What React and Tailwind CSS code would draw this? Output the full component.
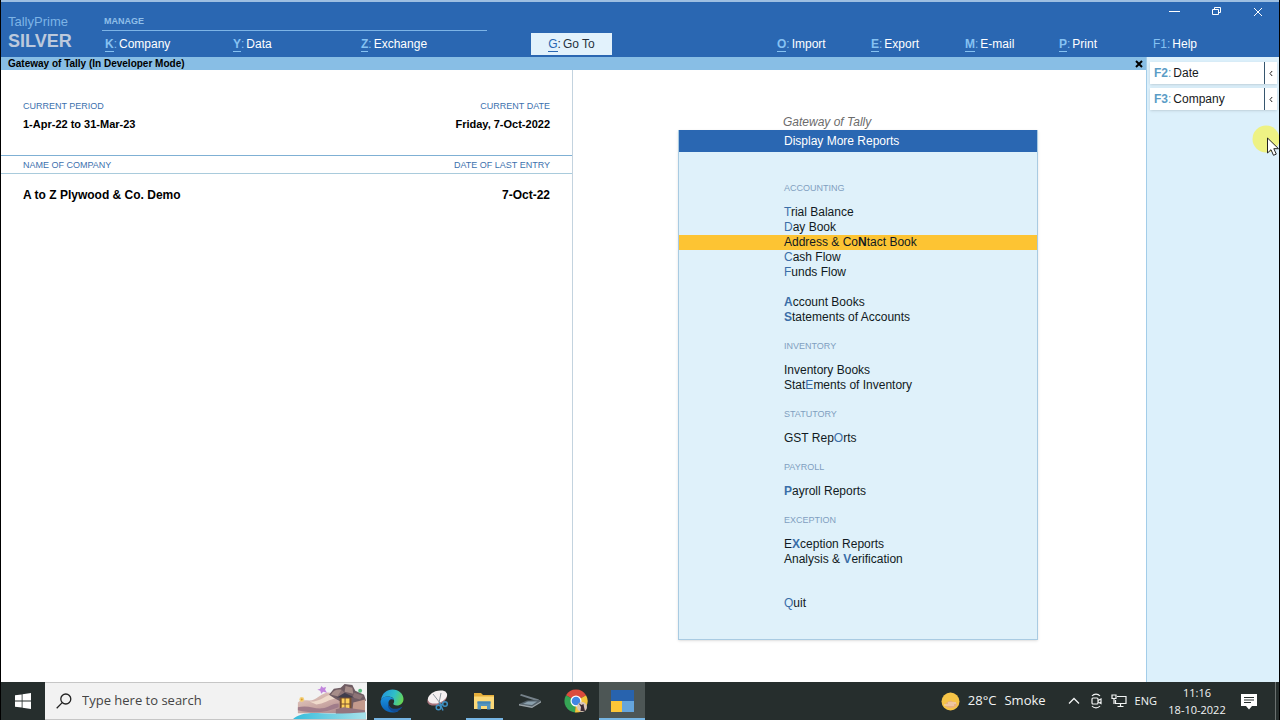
import React from 'react';

const FILE_MENU = [
  { key: 'K', label: 'Company' },
  { key: 'Y', label: 'Data' },
  { key: 'Z', label: 'Exchange' },
];

const TOOLS_MENU = [
  { key: 'O', label: 'Import' },
  { key: 'E', label: 'Export' },
  { key: 'M', label: 'E-mail' },
  { key: 'P', label: 'Print' },
  { key: 'F1', label: 'Help', plain: true },
];

// pre + hot + post = full label, "hot" is the shortcut letter
const GROUPS = [
  {
    title: 'ACCOUNTING',
    items: [
      { hot: 'T', post: 'rial Balance' },
      { hot: 'D', post: 'ay Book' },
      { pre: 'Address & Co', hot: 'N', post: 'tact Book', active: true },
      { hot: 'C', post: 'ash Flow' },
      { hot: 'F', post: 'unds Flow' },
      { hot: 'A', post: 'ccount Books', gap: true, bold: true },
      { hot: 'S', post: 'tatements of Accounts', bold: true },
    ],
  },
  {
    title: 'INVENTORY',
    items: [
      { hot: 'I', post: 'nventory Books', dark: true },
      { pre: 'Stat', hot: 'E', post: 'ments of Inventory' },
    ],
  },
  { title: 'STATUTORY', items: [{ pre: 'GST Rep', hot: 'O', post: 'rts' }] },
  { title: 'PAYROLL', items: [{ hot: 'P', post: 'ayroll Reports', bold: true }] },
  {
    title: 'EXCEPTION',
    items: [
      { pre: 'E', hot: 'X', post: 'ception Reports', bold: true },
      { pre: 'Analysis & ', hot: 'V', post: 'erification', bold: true },
    ],
  },
];

function MenuKey({ item }) {
  return (
    <button type="button" className="flex flex-1 items-center gap-[2px] text-left text-[12px] text-white">
      <span className="text-[#86c2f2]">
        <span className={item.plain ? '' : 'font-bold border-b border-[#86c2f2]'}>{item.key}</span>:
      </span>
      {item.label}
    </button>
  );
}

function WindowControls() {
  return (
    <div className="flex text-white">
      <button type="button" aria-label="Minimize" className="flex h-[19px] w-[41px] items-center justify-center">
        <svg width="11" height="11" viewBox="0 0 11 11" stroke="currentColor"><path d="M0 5.5h11" /></svg>
      </button>
      <button type="button" aria-label="Restore" className="flex h-[19px] w-[42px] items-center justify-center">
        <svg width="11" height="11" viewBox="0 0 11 11" fill="none" stroke="currentColor">
          <path d="M1.5 3.5h6v5h-6zM3.500 3.500v-2h6v5h-2" />
        </svg>
      </button>
      <button type="button" aria-label="Close" className="flex h-[19px] w-[42px] items-center justify-center">
        <svg width="10" height="10" viewBox="0 0 10 10" stroke="currentColor"><path d="M1 1l8 8M9 1L1 9" /></svg>
      </button>
    </div>
  );
}

function Header() {
  return (
    <header className="flex h-[57px] shrink-0 border-t-2 border-[#9dbfe2] bg-[#2a67b2]">
      <div className="w-[101px] shrink-0 pl-[7px] pt-3">
        <div className="text-[13px] leading-4 text-[#7db4e6]">TallyPrime</div>
        <div className="text-[18px] font-bold leading-[22px] text-[#bcc9dc]">SILVER</div>
      </div>
      <div className="flex flex-1 flex-col">
        <div className="flex h-[29px] items-start justify-between">
          <div className="flex h-full w-[385px] items-end border-b border-[#7db4e6] pb-[3px] pl-[2px] text-[9px] font-bold leading-3 text-[#8fbfe9]">
            MANAGE
          </div>
          <WindowControls />
        </div>
        <nav className="flex h-[26px] items-center pl-[3px]">
          <div className="flex flex-[384]">
            {FILE_MENU.map((m) => <MenuKey key={m.key} item={m} />)}
          </div>
          <div className="flex-[42]" />
          <div className="flex-[246]">
            <button type="button" className="flex h-[22px] w-[81px] items-center justify-center gap-[2px] bg-[#e2f2fc] text-[12px] text-[#27313c]">
              <span><span className="border-b border-[#2a67b2] text-[#2a67b2]">G</span>:</span>
              Go To
            </button>
          </div>
          <div className="flex flex-[470]">
            {TOOLS_MENU.map((m) => <MenuKey key={m.key} item={m} />)}
          </div>
          <div className="flex-[32]" />
        </nav>
      </div>
    </header>
  );
}

function CompanyPanel() {
  return (
    <section className="flex-[573] border-r border-[#c3d3df] text-[11px]">
      <div className="flex h-[85px] justify-between px-[22px] pt-[29px]">
        <div>
          <div className="text-[9px] leading-[14px] text-[#3d71ae]">CURRENT PERIOD</div>
          <div className="mt-[2px] font-bold leading-[18px]">1-Apr-22 to 31-Mar-23</div>
        </div>
        <div className="text-right">
          <div className="text-[9px] leading-[14px] text-[#3d71ae]">CURRENT DATE</div>
          <div className="mt-[2px] font-bold leading-[18px]">Friday, 7-Oct-2022</div>
        </div>
      </div>
      <table className="w-full border-separate border-spacing-0">
        <thead>
          <tr className="h-[19px] text-[9px] leading-3 text-[#3d71ae]">
            <th className="border-b border-t border-b-[#a9cbdc] border-t-[#7fb0d4] pl-[22px] text-left font-normal">NAME OF COMPANY</th>
            <th className="border-b border-t border-b-[#a9cbdc] border-t-[#7fb0d4] pr-[22px] text-right font-normal">DATE OF LAST ENTRY</th>
          </tr>
        </thead>
        <tbody>
          <tr className="h-[41px] text-[12px] font-bold">
            <td className="pl-[22px]">A to Z Plywood &amp; Co. Demo</td>
            <td className="pr-[22px] text-right">7-Oct-22</td>
          </tr>
        </tbody>
      </table>
    </section>
  );
}

function ReportItem({ item }) {
  let hot = 'text-[#3a6ea8]';
  if (item.active) hot = 'font-bold';
  else if (item.bold) hot = 'font-bold text-[#3a6ea8]';
  else if (item.dark) hot = '';

  return (
    <li className={item.gap ? 'mt-[15px]' : ''}>
      <button
        type="button"
        className={`block h-[15px] w-full pl-[105px] text-left text-[12px] leading-[15px] ${item.active ? 'bg-[#fdc433]' : ''}`}
      >
        {item.pre}<span className={hot}>{item.hot}</span>{item.post}
      </button>
    </li>
  );
}

function ReportsMenu() {
  return (
    <section className="flex flex-[572] justify-center pr-[3px] pt-[44px]">
      <div className="w-[360px]">
        <div className="pl-[105px] text-[12px] italic leading-4 text-[#6b6b6b]">Gateway of Tally</div>
        <div className="border border-t-0 border-[#a9cbe2] bg-[#dff1fa] pb-[28px] text-[#111a22] shadow-sm">
          <h2 className="mb-[15px] bg-[#2a67b2] pl-[105px] text-[12px] leading-[22px] text-white">Display More Reports</h2>
          {GROUPS.map((g) => (
            <div key={g.title}>
              <h3 className="pb-[9px] pl-[105px] pt-[14px] text-[9px] leading-[15px] text-[#7f9fc0]">{g.title}</h3>
              <ul>
                {g.items.map((it) => <ReportItem key={it.hot + it.post} item={it} />)}
              </ul>
            </div>
          ))}
          <ul className="mt-[29px]">
            <ReportItem item={{ hot: 'Q', post: 'uit' }} />
          </ul>
        </div>
      </div>
    </section>
  );
}

function SideButton({ keyName, label }) {
  return (
    <div className="flex h-[22px] bg-white text-[12px] shadow-sm">
      <button type="button" className="flex flex-1 items-center gap-[2px] pl-1 text-left text-[#16191c]">
        <span className="text-[#5b9cc6]"><b>{keyName}</b>:</span>{label}
      </button>
      <button type="button" aria-label={`Expand ${label}`} className="flex w-[13px] items-center justify-center border-l border-[#36566f]">
        <svg width="4" height="7" viewBox="0 0 4 7" fill="none" stroke="#222"><path d="M3.200 1L1 3.500 3.200 6" /></svg>
      </button>
    </div>
  );
}

function Pointer() {
  return (
    <svg className="pointer-events-none absolute right-0 top-[68px]" width="27" height="36" viewBox="0 0 27 36">
      <circle cx="14" cy="14" r="13.500" fill="#eef284" />
      <path d="M15.500 13v15l3.500-3.300 2.500 5.600 2.800-1.200-2.500-5.400h4.700z" fill="#fff" stroke="#222" />
    </svg>
  );
}

function WindowsLogo() {
  return (
    <svg width="16" height="16" viewBox="0 0 16 16" fill="#fff">
      <path d="M0 2.300l6.700-.9v6.200H0zM7.500 1.300L16 0v7.600H7.500zM0 8.400h6.700v6.200L0 13.700zM7.500 8.400H16V16l-8.500-1.300z" />
    </svg>
  );
}

function SearchScene() {
  return (
    <svg className="h-full" width="75" height="37" viewBox="0 0 75 37">
      <defs>
        <linearGradient id="dune" x1="0" x2="1" y1="0" y2="1">
          <stop offset="0" stopColor="#e8cfc4" /><stop offset=".5" stopColor="#c9a6a2" /><stop offset="1" stopColor="#9c7c86" />
        </linearGradient>
        <linearGradient id="sea" x1="0" x2="1">
          <stop offset="0" stopColor="#35bcdc" /><stop offset="1" stopColor="#a9e2ea" />
        </linearGradient>
      </defs>
      <path d="M5 31V20c3-3 8-2 12-2 7 0 10-6 17-8 4-1 7 1 10 3l30 2v16z" fill="url(#dune)" />
      <path d="M5 25c10-3 17 2 25 1 7-1 10-5 17-5v4c-12 5-26 7-42 3z" fill="#a07c8a" />
      <path d="M17 19c8 1 15-5 21-7 3 0 5 2 7 4-7 0-14 6-21 6z" fill="#efdacb" />
      <path d="M37 12l5-6 7-1 4-4 8 1 3 6 9 4 2 6-5 3v7H49v-9l-6-3z" fill="#6f5c63" />
      <path d="M39 12c2-4 6-6 11-5l-3 7zM54 3l7 2 1 6-9-2z" fill="#a68d89" />
      <path d="M63 10l9 3-3 4-8-2zM50 7l4 4-4 5-4-3z" fill="#8d7476" />
      <path d="M62 20l12-3v12H61z" fill="#c39a8c" />
      <path d="M48 14h12v14H48z" fill="#79502f" />
      <path d="M50 16h3v5h-3zM54 16h4v5h-4zM50 22h3v5h-3zM54 22h4v5h-4z" fill="#ffd15a" />
      <path d="M45 15l8-5 10 5z" fill="#3f3d4c" />
      <path d="M44 27l8-2 22 3v4H44z" fill="#94747d" />
      <path d="M0 37c5-5 15-7 29-6 16 1 30 0 46-1v7z" fill="url(#sea)" />
      <path d="M29 3l2 2 3-1-1 3 2 3-4-1-2 2-1-3-3-1 3-1z" fill="#c184dd" />
      <circle cx="69" cy="8" r="2" fill="#54b97a" />
      <circle cx="9" cy="17" r="2.500" fill="#f3cf78" />
      <circle cx="9" cy="17" r="1" fill="#d99a2b" />
    </svg>
  );
}

function EdgeIcon() {
  return (
    <svg width="24" height="24" viewBox="0 0 24 24">
      <defs>
        <linearGradient id="edgeTop" x1="0" x2="1" y1=".3" y2=".6">
          <stop offset="0" stopColor="#2395dd" /><stop offset=".55" stopColor="#30bfc7" /><stop offset="1" stopColor="#68d651" />
        </linearGradient>
        <linearGradient id="edgeLow" x1="0" x2="0" y1="0" y2="1">
          <stop offset="0" stopColor="#1b93df" /><stop offset="1" stopColor="#0a5fb4" />
        </linearGradient>
      </defs>
      <path d="M1 11C2 4 7 .5 12.500.500 19 .5 23.500 5 23.500 10c0 4-3 6.500-6.500 6.500-3 0-4-1.200-3.600-2 1.500-1.600 1.300-6.500-4.400-7C5.500 7 2.500 8.500 1 11z" fill="url(#edgeTop)" />
      <path d="M.5 12C1.500 8.700 5 7.300 8.500 7.500c3 .2 5 1.800 5.500 3.500-3-2-6 .5-5.500 4 .6 4.500 6 7.500 10 7-1.800 1-4 1.500-6 1.500C5.500 23.500.200 18 .5 12z" fill="url(#edgeLow)" />
      <path d="M8.500 14c0 5.500 7 8 14 3.500-1 2.500-4 5-7.500 5.500-5-.5-8.500-5-6.500-9z" fill="#124c93" />
    </svg>
  );
}

function SnipIcon() {
  return (
    <svg width="24" height="24" viewBox="0 0 24 24" fill="none">
      <ellipse cx="11" cy="10" rx="10" ry="6" transform="rotate(-20 11 10)" fill="#a8747c" />
      <ellipse cx="11.500" cy="8" rx="10" ry="6" transform="rotate(-20 11.500 8)" fill="#f6f0f1" />
      <path d="M7 5l7 9M15 4l-2 10" stroke="#8e979e" />
      <circle cx="12.500" cy="18.500" r="2.300" stroke="#3d8fc0" strokeWidth="1.500" />
      <circle cx="19" cy="15" r="2.300" stroke="#3d8fc0" strokeWidth="1.500" />
      <path d="M13.500 13.500l3.500 8M14 16.500l3-1.500" stroke="#3d8fc0" strokeWidth="1.500" />
    </svg>
  );
}

function FolderIcon() {
  return (
    <svg width="22" height="20" viewBox="0 0 22 20">
      <path d="M1 2h7l2 2h11v6H1z" fill="#e5ae3a" />
      <path d="M1 5.500h20V18H1z" fill="#fcd978" />
      <path d="M4.500 18.500V10.500h13v8H14V15H8v3.500z" fill="#5494bd" />
      <path d="M4.500 10.500h13v2h-13z" fill="#4385b5" />
    </svg>
  );
}

function ScannerIcon() {
  return (
    <svg width="24" height="18" viewBox="0 0 24 18">
      <path d="M3 2l18 5.500-1 2L2 3.500z" fill="#76828a" />
      <path d="M1 12l8-3.500 13-.5 1 1-9 6z" fill="#536069" />
      <path d="M5 12l5-2.500h9l-5 3.500z" fill="#8ba0ad" />
      <path d="M1 12l13 2.500 9-5.500v1.500L14 16 1 13.500z" fill="#9ba4a9" />
    </svg>
  );
}

function ChromeIcon() {
  return (
    <svg width="24" height="24" viewBox="0 0 24 24">
      <path d="M12 12L2 6.200A11.500 11.500 0 0 1 22 6.200z" fill="#dc4b3d" />
      <path d="M12 12l-1 11.500A11.500 11.500 0 0 1 2 6.200z" fill="#35a454" />
      <path d="M12 12L22 6.200A11.500 11.500 0 0 1 11 23.500z" fill="#f5c63c" />
      <path d="M12 6.500h10.200L22 6.200 12 3z" fill="#dc4b3d" />
      <circle cx="12" cy="12" r="5.500" fill="#fff" />
      <circle cx="12" cy="12" r="4.300" fill="#4186e3" />
      <circle cx="18" cy="18" r="5" fill="#d9c6ba" />
      <path d="M14.500 14l3 2 2-1 .5 3 1 4h-4.500l.5-4z" fill="#3c2c35" />
    </svg>
  );
}

function TallyIcon() {
  return (
    <svg width="23" height="22" viewBox="0 0 23 22">
      <path d="M0 0h23v11H0z" fill="#2863ae" />
      <path d="M0 11h11v11H0z" fill="#fdc637" />
      <path d="M11 11h12v11H11z" fill="#65a5dc" />
    </svg>
  );
}

const TASKS = [
  { name: 'Edge', Icon: EdgeIcon, running: true },
  { name: 'Snipping Tool', Icon: SnipIcon },
  { name: 'File Explorer', Icon: FolderIcon, running: true },
  { name: 'Scanner', Icon: ScannerIcon },
  { name: 'Chrome', Icon: ChromeIcon },
  { name: 'Tally', Icon: TallyIcon, active: true },
];

function TaskButton({ task }) {
  const { Icon } = task;
  return (
    <button
      type="button"
      aria-label={task.name}
      className={`flex w-[46px] flex-col items-center ${task.active ? 'bg-[#4d5655]' : ''}`}
    >
      <span className="flex w-full flex-1 items-center justify-center pt-[2px]"><Icon /></span>
      <span className={`h-[2px] ${task.active ? 'w-full bg-[#76b5e3]' : task.running ? 'w-[37px] bg-[#76b5e3]' : 'w-0'}`} />
    </button>
  );
}

function Taskbar() {
  return (
    <footer className="flex h-[38px] shrink-0 bg-[#262e2d] font-['Open_Sans','Noto_Sans',sans-serif] text-[#f2f4f4]">
      <button type="button" aria-label="Start" className="flex w-[44px] items-center justify-center">
        <WindowsLogo />
      </button>
      <label className="flex w-[322px] items-center border-y border-[#c6c6c6] bg-[#f2f2f2] pl-[11px]">
        <svg width="16" height="16" viewBox="0 0 16 16" fill="none" stroke="#222" strokeWidth="1.300">
          <circle cx="9.800" cy="6" r="5" /><path d="M6.200 9.600L.700 15.200" />
        </svg>
        <input
          type="text"
          aria-label="Search"
          placeholder="Type here to search"
          className="ml-[10px] min-w-0 flex-1 bg-transparent text-[13px] text-[#444] outline-none placeholder:text-[#444]"
        />
        <SearchScene />
      </label>
      <div className="flex pl-[2px]">
        {TASKS.map((t) => <TaskButton key={t.name} task={t} />)}
      </div>

      <div className="flex flex-1 items-center justify-end text-[13px]">
        <button type="button" className="flex items-center">
          <svg width="19" height="19" viewBox="0 0 19 19">
            <circle cx="9.500" cy="9.500" r="9" fill="#f6c447" />
            <path d="M5 14.500a2.500 2.500 0 0 1 1-4 4 4 0 0 1 6-.5 3 3 0 0 1 4 3c-2 3-7 4-11 1.500z" fill="#e8b080" />
            <path d="M3 13h10M7 11h8" stroke="#f5dcc0" />
          </svg>
          <span className="ml-2">28°C</span>
          <span className="ml-2">Smoke</span>
        </button>
        <button type="button" aria-label="Hidden icons" className="ml-[22px]">
          <svg width="12" height="8" viewBox="0 0 12 8" fill="none" stroke="currentColor" strokeWidth="1.300"><path d="M1 6.500l5-5 5 5" /></svg>
        </button>
        <button type="button" aria-label="Meet now" className="ml-[10px]">
          <svg width="13" height="16" viewBox="0 0 13 16" fill="none" stroke="currentColor" strokeWidth="1.200">
            <rect x="2" y="5" width="6" height="6" rx="1" /><path d="M8 7.500l3-1.500v4.500L8 9M2 3c2-2.500 6-2.500 8 0M2 13c2 2.500 6 2.500 8 0" />
          </svg>
        </button>
        <button type="button" aria-label="Network" className="ml-2">
          <svg width="16" height="14" viewBox="0 0 16 14" fill="none" stroke="currentColor" strokeWidth="1.200">
            <path d="M6 2.500h9v7H4.500V6M9.500 9.500v3M6.500 12.500h6" /><path d="M1 1h4v3.500H1zM3 4.500V10" />
          </svg>
        </button>
        <button type="button" className="ml-2 text-[11px]">ENG</button>
        <time className="ml-[10px] w-[60px] whitespace-nowrap text-center text-[11px] leading-[17px]">
          11:16<br />18-10-2022
        </time>
        <button type="button" aria-label="Notifications" className="ml-[14px]">
          <svg width="16" height="17" viewBox="0 0 16 17">
            <path d="M0 1h16v12h-5l-3 3.500L5 13H0z" fill="#fff" /><path d="M3 4.500h10M3 7h10M3 9.500h7" stroke="#262e2d" />
          </svg>
        </button>
        <div className="ml-[18px] mr-[3px] h-full border-l border-[#6b7170]" />
      </div>
    </footer>
  );
}

export default function App() {
  return (
    <div className="flex h-screen flex-col overflow-hidden border-x border-black bg-white font-['Liberation_Sans',Arial,sans-serif] text-black">
      <Header />
      <div className="flex min-h-0 flex-1">
        <div className="flex flex-1 flex-col">
          <div className="flex h-[13px] items-center justify-between bg-[#88bee5] pl-[7px] pr-[3px] text-[10px] font-bold leading-[13px]">
            Gateway of Tally (In Developer Mode)
            <button type="button" aria-label="Close Gateway of Tally">
              <svg width="8" height="8" viewBox="0 0 8 8" stroke="#000" strokeWidth="2"><path d="M1 1l6 6M7 1L1 7" /></svg>
            </button>
          </div>
          <main className="flex flex-1">
            <CompanyPanel />
            <ReportsMenu />
          </main>
        </div>
        <aside className="relative w-[133px] shrink-0 border-l border-[#a3cde9] bg-[#dcf0fb] pl-[3px] pr-[2px] pt-[5px]">
          <div className="flex flex-col gap-1">
            <SideButton keyName="F2" label="Date" />
            <SideButton keyName="F3" label="Company" />
          </div>
          <Pointer />
        </aside>
      </div>
      <Taskbar />
    </div>
  );
}
